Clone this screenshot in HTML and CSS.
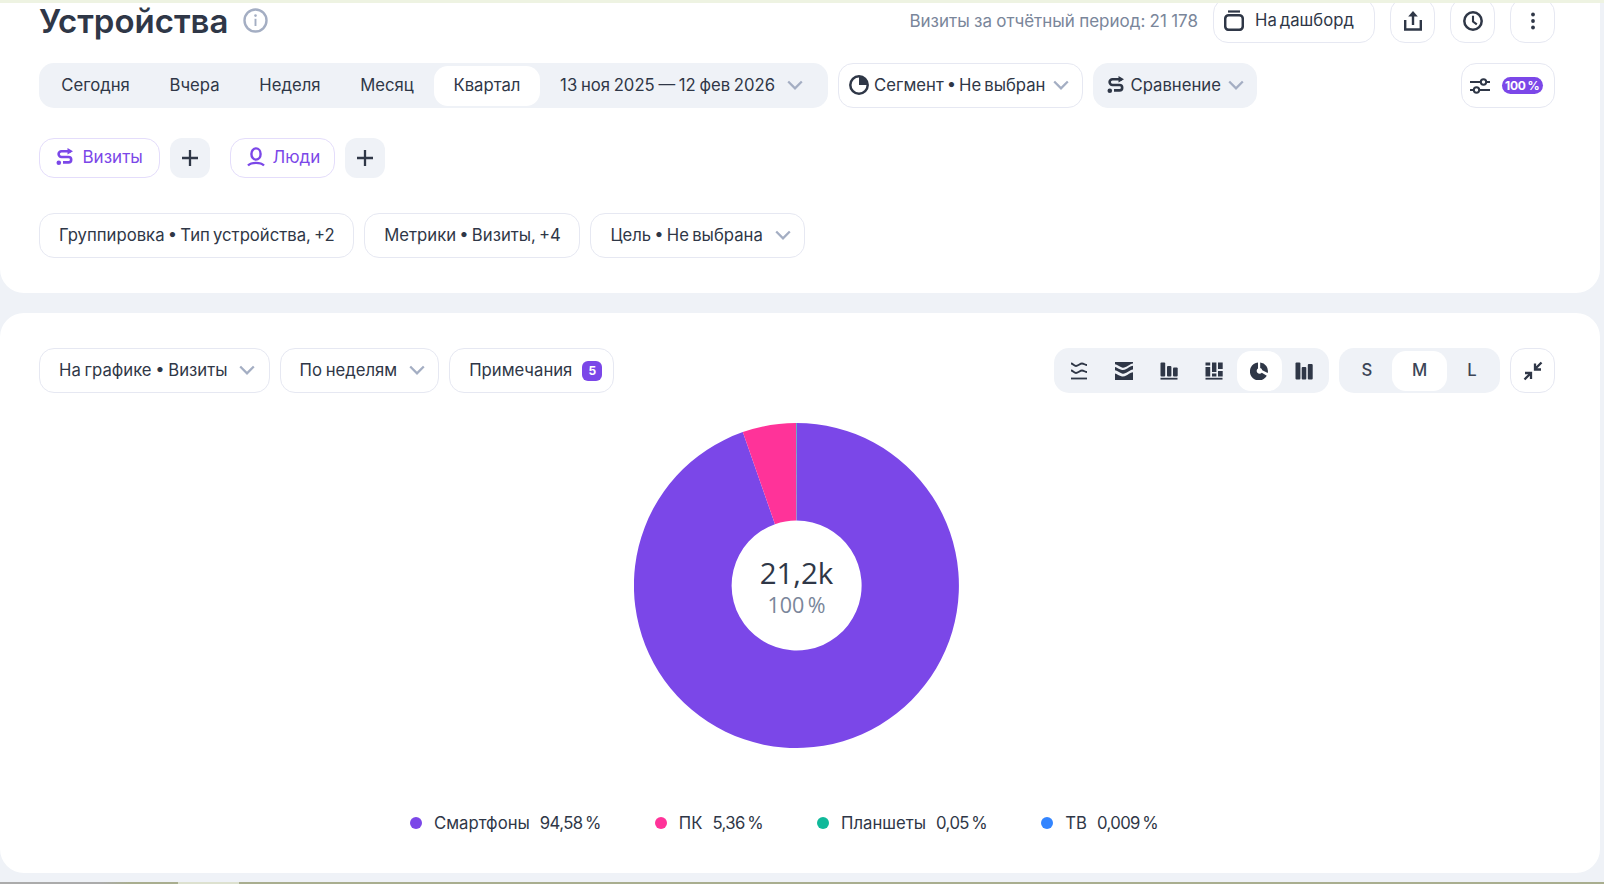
FILE: index.html
```html
<!DOCTYPE html>
<html lang="ru">
<head>
<meta charset="utf-8">
<title>Устройства</title>
<link rel="stylesheet" href="styles.css">
</head>
<body>
<svg class="defs" width="0" height="0">
  <symbol id="chev" viewBox="0 0 16 10"><path d="M1.200 1.500 8 8.300l6.800-6.800" fill="none" stroke="currentColor" stroke-width="2.300"/></symbol>
  <symbol id="swap" viewBox="0 0 18 18"><path d="M15 3.200H5.500a2.900 2.900 0 0 0 0 5.800h7a2.700 2.700 0 0 1 0 5.400H7" fill="none" stroke="currentColor" stroke-width="2.600"/><path d="M11.500 0l5.500 3.200-5.500 3.200z" fill="currentColor"/><circle cx="2.800" cy="14.700" r="2.300" fill="currentColor"/></symbol>
  <symbol id="plus" viewBox="0 0 18 18"><path d="M9 1v16M1 9h16" stroke="currentColor" stroke-width="2.300"/></symbol>
</svg>
<div class="strip-top"></div>
<main class="page">
  <section class="card card-top">
    <div class="row head">
      <h1 class="title">Устройства</h1>
      <svg class="info" width="25" height="25" viewBox="0 0 25 25"><circle cx="12.500" cy="12.500" r="11" fill="none" stroke="#A4AEC3" stroke-width="2.400"/><circle cx="12.500" cy="7.600" r="1.300" fill="#A4AEC3"/><path d="M12.500 10.800v7.200" stroke="#A4AEC3" stroke-width="1.900"/></svg>
      <span class="spacer"></span>
      <span class="visits">Визиты за отчётный период: 21 178</span>
      <button class="btn dash">
        <svg width="20" height="21" viewBox="0 0 20 21"><path d="M4 1.500h12" stroke="#2F3747" stroke-width="2.200"/><rect x="1.200" y="5.200" width="17.600" height="14.600" rx="3.500" fill="none" stroke="#2F3747" stroke-width="2.500"/></svg>
        <span class="dash-text">На дашборд</span>
      </button>
      <button class="btn square">
        <svg width="18" height="20" viewBox="0 0 18 20"><path d="M1.200 9v9.500h15.600V9" fill="none" stroke="#2F3747" stroke-width="2.400"/><path d="M9 14V3" stroke="#2F3747" stroke-width="2.400"/><path d="M9 0l4.800 5.500H4.200z" fill="#2F3747"/></svg>
      </button>
      <button class="btn square">
        <svg width="20" height="20" viewBox="0 0 20 20"><circle cx="10" cy="10" r="8.700" fill="none" stroke="#2F3747" stroke-width="2.500"/><path d="M10 4.800V10.500l3.800 2.800" fill="none" stroke="#2F3747" stroke-width="2.100"/></svg>
      </button>
      <button class="btn square">
        <svg width="6" height="18" viewBox="0 0 6 18"><circle cx="3" cy="2.500" r="1.900" fill="#2F3747"/><circle cx="3" cy="9" r="1.900" fill="#2F3747"/><circle cx="3" cy="15.500" r="1.900" fill="#2F3747"/></svg>
      </button>
    </div>

    <div class="row period">
      <div class="seg">
        <span class="tab">Сегодня</span>
        <span class="tab">Вчера</span>
        <span class="tab">Неделя</span>
        <span class="tab">Месяц</span>
        <span class="tab active">Квартал</span>
        <span class="tab date">13 ноя 2025 — 12 фев 2026<svg class="chev" width="16" height="10"><use href="#chev"/></svg></span>
      </div>
      <button class="btn segment">
        <svg width="20" height="20" viewBox="0 0 20 20"><circle cx="10" cy="10" r="8.700" fill="none" stroke="#2F3747" stroke-width="2.500"/><path d="M10 10V1.300A8.700 8.700 0 0 1 18.700 10z" fill="#2F3747"/></svg>
        <span>Сегмент • Не выбран</span>
        <svg class="chev chev-gap" width="16" height="10"><use href="#chev"/></svg>
      </button>
      <button class="btn filled compare">
        <svg class="ic-dark" width="18" height="18"><use href="#swap"/></svg>
        <span>Сравнение</span>
        <svg class="chev chev-gap" width="16" height="10"><use href="#chev"/></svg>
      </button>
      <span class="spacer"></span>
      <button class="btn sampling">
        <svg width="20" height="18" viewBox="0 0 20 18"><path d="M0 5h10.500M16.500 5H20M0 13h3.500M9.500 13H20" stroke="#2F3747" stroke-width="2.200"/><circle cx="13.500" cy="5" r="2.700" fill="none" stroke="#2F3747" stroke-width="2"/><circle cx="6.500" cy="13" r="2.700" fill="none" stroke="#2F3747" stroke-width="2"/></svg>
        <span class="badge-pct">100&#8201;%</span>
      </button>
    </div>

    <div class="row chips">
      <button class="chip visits-chip">
        <svg width="18" height="18"><use href="#swap"/></svg>
        <span>Визиты</span>
      </button>
      <button class="add"><svg width="18" height="18"><use href="#plus"/></svg></button>
      <button class="chip people-chip">
        <svg width="18" height="20" viewBox="0 0 18 20"><ellipse cx="9" cy="7" rx="4.600" ry="5.600" fill="none" stroke="currentColor" stroke-width="2.400"/><path d="M1 18.500c2-2 4.500-2.600 8-2.600s6 .6 8 2.600" fill="none" stroke="currentColor" stroke-width="2.400"/></svg>
        <span>Люди</span>
      </button>
      <button class="add"><svg width="18" height="18"><use href="#plus"/></svg></button>
    </div>

    <div class="row filters">
      <button class="btn pad">Группировка • Тип устройства, +2</button>
      <button class="btn pad">Метрики • Визиты, +4</button>
      <button class="btn pad has-chev">Цель • Не выбрана<svg class="chev" width="16" height="10"><use href="#chev"/></svg></button>
    </div>
  </section>

  <section class="card card-chart">
    <div class="row toolbar">
      <button class="btn pad has-chev">На графике • Визиты<svg class="chev" width="16" height="10"><use href="#chev"/></svg></button>
      <button class="btn pad has-chev">По неделям<svg class="chev" width="16" height="10"><use href="#chev"/></svg></button>
      <button class="btn pad notes">Примечания<span class="count">5</span></button>
      <span class="spacer"></span>
      <div class="seg kinds">
        <span class="kind"><svg width="18" height="18" viewBox="0 0 18 18"><path d="M1 1.500c2 0 3 2.500 5 2.500s4-2.500 6-2.500 3 1.500 5 1.500M1 8.500c2 0 3 2.500 5 2.500s4-2.500 6-2.500 3 1.500 5 1.500" fill="none" stroke="#2F3747" stroke-width="1.800"/><path d="M1 16.500h16" stroke="#2F3747" stroke-width="1.800"/></svg></span>
        <span class="kind"><svg width="18" height="18" viewBox="0 0 18 18"><path d="M0 0h18v1.500c-2 .2-3 1-5 2.200S9 6.200 7 5.500 2 2.500 0 2.200zM0 5c2 .3 4 2.500 7 3s5-1.500 7-2.700c1.500-.8 2.500-1.300 4-1.500v3.700c-2 .2-3 1-5 2.200s-4 2.500-6 1.800-5-3-7-3.300zM0 11.500c2 .3 4 2.500 7 3s5-1.500 7-2.700c1.500-.8 2.500-1.300 4-1.500V18H0z" fill="#2F3747"/></svg></span>
        <span class="kind"><svg width="18" height="18" viewBox="0 0 18 18"><rect x="0.500" y="0.500" width="4.700" height="14" rx="1" fill="#2F3747"/><rect x="7" y="4" width="4.400" height="10.500" rx="1" fill="#2F3747"/><rect x="13" y="5.500" width="4.700" height="9" rx="1" fill="#2F3747"/><path d="M0.500 16.700h17" stroke="#2F3747" stroke-width="1.800"/></svg></span>
        <span class="kind"><svg width="18" height="18" viewBox="0 0 18 18"><rect x="0.500" y="0.500" width="4.700" height="3" fill="#2F3747"/><rect x="0.500" y="5" width="4.700" height="9.500" fill="#2F3747"/><rect x="7" y="0.500" width="4.400" height="9.500" fill="#2F3747"/><rect x="7" y="11.500" width="4.400" height="3" fill="#2F3747"/><rect x="13" y="0.500" width="4.700" height="6.500" fill="#2F3747"/><rect x="13" y="9" width="4.700" height="5.500" fill="#2F3747"/><path d="M0.500 16.700h17" stroke="#2F3747" stroke-width="1.800"/></svg></span>
        <span class="kind active"><svg width="18" height="18" viewBox="0 0 18 18"><path d="M8 .5v6A2.900 2.900 0 1 0 11.800 10.800l5 3A9 9 0 1 1 8 .5z" fill="#2F3747"/><path d="M10.200.6a8.500 8.500 0 0 1 7.500 10.400l-5.400-2.700a3.200 3.200 0 0 0-2.100-2.300z" fill="#2F3747"/></svg></span>
        <span class="kind"><svg width="18" height="18" viewBox="0 0 18 18"><rect x="0.500" y="0.500" width="4.900" height="17" rx="1" fill="#2F3747"/><rect x="6.700" y="5" width="4.600" height="12.500" rx="1" fill="#2F3747"/><rect x="12.800" y="2" width="4.900" height="15.500" rx="1" fill="#2F3747"/></svg></span>
      </div>
      <div class="seg sizes">
        <span class="size">S</span>
        <span class="size active">M</span>
        <span class="size">L</span>
      </div>
      <button class="btn square">
        <svg width="20" height="20" viewBox="0 0 20 20"><path d="M18.500 1.500 12.500 7.500M12 2.500v6h6M1.500 18.500l6-6M2 12h6v6" fill="none" stroke="#2F3747" stroke-width="2.300"/></svg>
      </button>
    </div>

    <div class="donut">
      <svg class="donut-svg" width="325" height="325" viewBox="-162.500 -162.500 325 325">
        <path d="M0 -162.500A162.500 162.500 0 1 1 -53.700 -153.400L-21.500 -61.300A65 65 0 1 0 0 -65Z" fill="#7B47E8"/>
        <path d="M-53.700 -153.400A162.500 162.500 0 0 1 -0.500 -162.500L-0.200 -65A65 65 0 0 0 -21.500 -61.300Z" fill="#FF3399"/>
        <path d="M-0.500 -162.500H0V-65H-0.200Z" fill="#10B99A"/>
      </svg>
      <div class="donut-label">
        <span class="total">21,2k</span>
        <span class="share">100&#8201;%</span>
      </div>
    </div>

    <ul class="legend">
      <li class="legend-item"><i class="dot dot-a"></i><span>Смартфоны</span><span class="num">94,58&#8201;%</span></li>
      <li class="legend-item"><i class="dot dot-b"></i><span>ПК</span><span class="num">5,36&#8201;%</span></li>
      <li class="legend-item"><i class="dot dot-c"></i><span>Планшеты</span><span class="num">0,05&#8201;%</span></li>
      <li class="legend-item"><i class="dot dot-d"></i><span>ТВ</span><span class="num">0,009&#8201;%</span></li>
    </ul>
  </section>
</main>
<div class="strip-bottom"></div>
</body>
</html>
```
FILE: styles.css
```css
* { box-sizing: border-box; }
html, body { margin: 0; padding: 0; height: 884px; overflow: hidden; }
body { background: #EFF2F7; color: #2F3747; font: 16.700px/20px Inter, "Noto Sans", sans-serif; word-spacing: -1.700px; display: flex; flex-direction: column; }
.defs { position: absolute; }
.strip-top { height: 3px; background: #EEF3E2; flex: none; position: relative; z-index: 1; }
.strip-bottom { height: 2px; margin-top: 9px; flex: none; background: linear-gradient(90deg, #ABABAB 0, #ABABAB 100px, #A9AE8F 130px, #A9AE8F 178px, #DDE1CF 178px, #DDE1CF 239px, #A9AE8F 239px); }
.page { width: 1600px; display: flex; flex-direction: column; gap: 20px; }
.card { background: #fff; }
.card-top { height: 290px; padding: 0 45px 35px 39px; border-radius: 0 0 24px 24px; }
.card-chart { height: 560px; padding: 35px 45px 0 39px; border-radius: 24px; }
.row { display: flex; align-items: center; }
.spacer { flex: 1; }
svg { flex: none; }

button { font: inherit; word-spacing: inherit; color: inherit; background: none; padding: 0; margin: 0; }
.btn { height: 45px; display: inline-flex; align-items: center; border: 1.500px solid #E6E8F2; border-radius: 15px; background: #fff; white-space: nowrap; flex: none; }
.btn.filled { background: #EFF2F7; border-color: #EFF2F7; }
.square { width: 45px; justify-content: center; }
.pad { padding: 0 18.500px 2px 19px; }
.has-chev { padding-right: 13px; gap: 12px; }
.chev { color: #A4AEC3; flex: none; }
.chev-gap { margin-left: 2.500px; }

.head { margin-top: -5px; height: 45px; gap: 15px; }
.title { margin: 0; font-size: 33px; line-height: 34px; font-weight: 600; }
.visits { color: #7A869A; font-size: 17px; word-spacing: -0.500px; }
.dash { width: 162px; padding: 0 0 0 10px; gap: 11px; }
.dash-text { margin-top: -2px; }

.period { margin-top: 20px; gap: 10px; }
.seg { display: flex; align-items: center; height: 45px; background: #EFF2F7; border-radius: 15px; padding: 0 2.500px; flex: none; }
.tab { height: 40px; display: inline-flex; align-items: center; padding: 0 19.850px 2px; border-radius: 14px; white-space: nowrap; }
.tab.active, .kind.active, .size.active { background: #fff; }
.date { gap: 12px; padding-right: 22px; word-spacing: -1px; }
.segment { padding: 0 13.500px 2px 10.500px; gap: 5px; }
.compare { padding: 0 12px 2px 13px; gap: 5px; }
.ic-dark { color: #2F3747; }
.sampling { padding: 0 0 0 8px; gap: 11.700px; width: 94px; }
.badge-pct { width: 41px; text-align: center; background: #7B47E8; color: #fff; font-size: 12px; font-weight: 700; line-height: 17px; height: 17px; border-radius: 9px; letter-spacing: -0.200px; }

.chips { margin-top: 30px; gap: 10px; }
.chip { height: 40px; display: inline-flex; align-items: center; gap: 9px; border: 1.500px solid #E4DDFB; border-radius: 15px; color: #7B47E8; background: #fff; flex: none; padding-bottom: 2px; font-size: 17px; }
.visits-chip { width: 121px; padding-left: 15.500px; }
.people-chip { width: 105px; padding-left: 15.500px; margin-left: 10px; gap: 8px; }
.add { width: 40px; height: 40px; border: 0; border-radius: 12px; background: #EFF2F7; display: inline-flex; align-items: center; justify-content: center; color: #2F3747; padding: 0; }

.filters { margin-top: 35px; gap: 10px; word-spacing: -1.500px; }

.toolbar { gap: 10px; word-spacing: -1px; }
.toolbar .has-chev { padding-right: 13.500px; gap: 11.500px; }
.notes { padding-right: 10.500px; gap: 10px; }
.count { width: 20px; height: 20px; margin-top: 2px; border-radius: 6px; background: #7B47E8; color: #fff; font-size: 12px; font-weight: 700; display: inline-flex; align-items: center; justify-content: center; }
.kinds { width: 275px; padding: 0 2.500px; }
.kind { width: 45px; height: 40px; display: inline-flex; align-items: center; justify-content: center; border-radius: 14px; }
.sizes { width: 161px; padding: 0 3px; }
.size { width: 50px; height: 40px; padding-bottom: 2px; display: inline-flex; align-items: center; justify-content: center; border-radius: 14px; font-weight: 500; color: #3C4557; }
.size.active { width: 55px; }

.donut { width: 325px; height: 325px; margin: 29.500px 0 0 595px; display: grid; place-items: center; }
.donut-svg, .donut-label { grid-area: 1 / 1; }
.donut-label { display: flex; flex-direction: column; align-items: center; padding-top: 3px; font-family: "Open Sans", sans-serif; word-spacing: 0; }
.total { font-size: 29.500px; line-height: 36px; color: #2F3747; }
.share { font-size: 21.500px; line-height: 27px; color: #7A869A; }

.legend { list-style: none; margin: 0; padding: 65px 0 0 371px; display: flex; gap: 54px; }
.legend-item { display: flex; align-items: center; gap: 10px; white-space: nowrap; }
.num { letter-spacing: -0.580px; }
.dot { width: 12px; height: 12px; border-radius: 50%; margin-right: 2px; }
.dot-a { background: #7B47E8; }
.dot-b { background: #FF3399; }
.dot-c { background: #10B99A; }
.dot-d { background: #3385FF; }
```
